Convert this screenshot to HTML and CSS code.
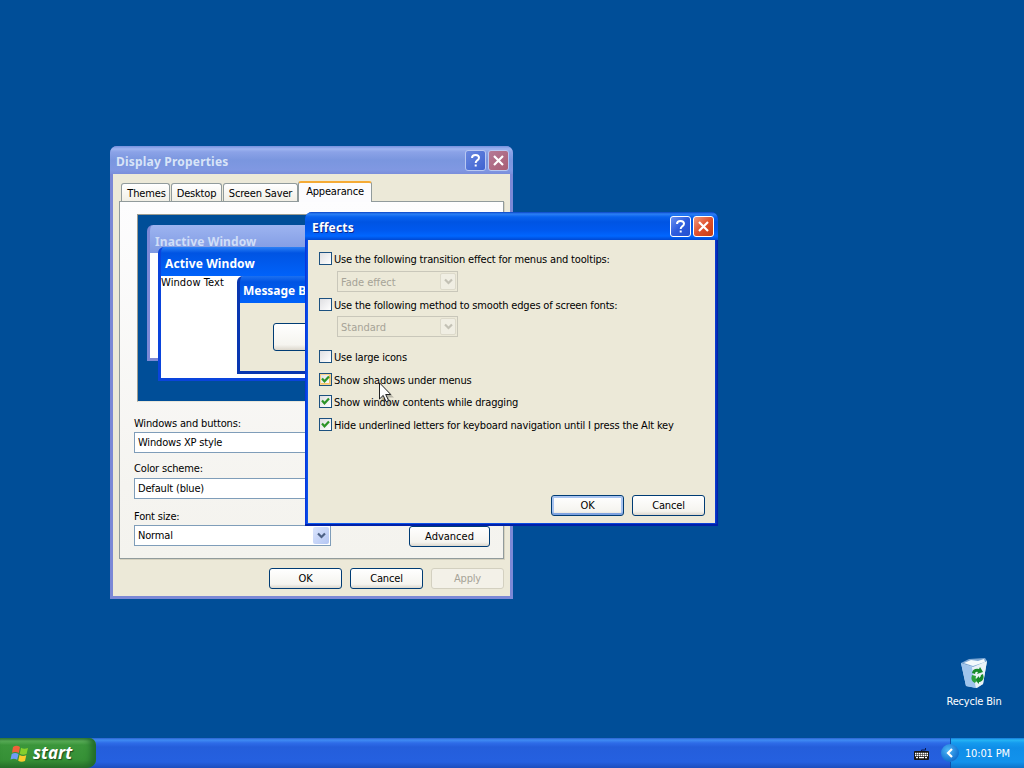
FILE: index.html
```html
<!DOCTYPE html>
<html lang="en">
<head>
  <meta charset="UTF-8" />
  <title>Desktop</title>
  <link rel="stylesheet" href="styles.css">
</head>
<body>
  <div class="desktop">

    <div class="shortcut">
      <svg width="32" height="32" viewBox="0 0 32 32">
        <path d="M3 6L14 9L29 4L25 27L19 31L8 29Z" fill="#c9dff2"/>
        <path d="M3 6L14 10L18 31L8 29Z" fill="#9fc4ec"/>
        <path d="M14 10L29 4L25 27L18 31Z" fill="#e9f2f6"/>
        <path d="M3 6L11 2L27 1L29 4L15 10Z" fill="#7fa8d4"/>
        <path d="M6 6L13 3L20 4L26 2L27 5L15 9Z" fill="#f4fafc"/>
        <path d="M14 16q1-5 7-4l1-2l3 5l-6 2l1-2q-3-1-3 2z" fill="#168a2b"/>
        <path d="M25 17q2 6-3 8h-1v2l-4-4l4-4v2q2-1 2-3z" fill="#168a2b"/>
        <path d="M14 18l4 1q-1 3 1 4l-2 3q-5-2-3-8z" fill="#2ba13c"/>
      </svg>
      <span>Recycle Bin</span>
    </div>

    <div class="window display inactive">
      <div class="titlebar">
        <span class="title">Display Properties</span>
        <div class="tb-btn help"><svg width="19" height="19" viewBox="0 0 19 19"><path d="M6 7q0-3 3.500-3t3.500 2.800q0 1.600-2 2.700q-1.300.8-1.300 2.500M9.700 13.500v2" stroke="#fff" stroke-width="2" fill="none"/></svg></div>
        <div class="tb-btn close"><svg width="19" height="19" viewBox="0 0 19 19"><path d="M5 5l9 9M14 5l-9 9" stroke="#fff" stroke-width="2.200"/></svg></div>
      </div>
      <div class="client">
        <div class="tabs">
          <div class="tab t1">Themes</div>
          <div class="tab t2">Desktop</div>
          <div class="tab t3">Screen Saver</div>
          <div class="tab active">Appearance</div>
        </div>
        <div class="panel">
          <div class="preview">
            <div class="mini mini-inactive"><div class="mini-title">Inactive Window</div></div>
            <div class="mini mini-active">
              <div class="mini-title">Active Window</div>
              <div class="mini-text">Window Text</div>
            </div>
            <div class="mini mini-msg">
              <div class="mini-title">Message Box</div>
              <div class="mini-body"><div class="btn mini-btn">OK</div></div>
            </div>
          </div>
          <div class="label l1">Windows and buttons:</div>
          <div class="combo"><span>Windows XP style</span></div>
          <div class="label l2">Color scheme:</div>
          <div class="combo"><span>Default (blue)</span></div>
          <div class="label l3">Font size:</div>
          <div class="size-row">
            <div class="combo"><span>Normal</span><div class="arrow"><svg width="9" height="7" viewBox="0 0 9 7"><path d="M1 1.500l3.500 3.500L8 1.500" stroke="#4d6185" stroke-width="2.200" fill="none"/></svg></div></div>
            <div class="btn advanced">Advanced</div>
          </div>
        </div>
        <div class="buttons">
          <div class="btn">OK</div>
          <div class="btn">Cancel</div>
          <div class="btn disabled">Apply</div>
        </div>
      </div>
    </div>

    <div class="window effects">
      <div class="titlebar">
        <span class="title">Effects</span>
        <div class="tb-btn help"><svg width="19" height="19" viewBox="0 0 19 19"><path d="M6 7q0-3 3.500-3t3.500 2.800q0 1.600-2 2.700q-1.300.8-1.300 2.500M9.700 13.500v2" stroke="#fff" stroke-width="2" fill="none"/></svg></div>
        <div class="tb-btn close"><svg width="19" height="19" viewBox="0 0 19 19"><path d="M5 5l9 9M14 5l-9 9" stroke="#fff" stroke-width="2.200"/></svg></div>
      </div>
      <div class="client">
        <div class="check first"><i class="box"></i><span>Use the following transition effect for menus and tooltips:</span></div>
        <div class="combo off"><span>Fade effect</span><div class="arrow"><svg width="9" height="7" viewBox="0 0 9 7"><path d="M1 1.500l3.500 3.500L8 1.500" stroke="#c3c1b5" stroke-width="2.200" fill="none"/></svg></div></div>
        <div class="check second"><i class="box"></i><span>Use the following method to smooth edges of screen fonts:</span></div>
        <div class="combo off"><span>Standard</span><div class="arrow"><svg width="9" height="7" viewBox="0 0 9 7"><path d="M1 1.500l3.500 3.500L8 1.500" stroke="#c3c1b5" stroke-width="2.200" fill="none"/></svg></div></div>
        <div class="check third"><i class="box"></i><span>Use large icons</span></div>
        <div class="check"><i class="box hot"><svg width="11" height="11" viewBox="0 0 11 11"><path d="M2 4.500l2.500 2.800L9 2.500" stroke="#2c9428" stroke-width="2.200" fill="none"/></svg></i><span>Show shadows under menus</span></div>
        <div class="check"><i class="box"><svg width="11" height="11" viewBox="0 0 11 11"><path d="M2 4.500l2.500 2.800L9 2.500" stroke="#2c9428" stroke-width="2.200" fill="none"/></svg></i><span>Show window contents while dragging</span></div>
        <div class="check"><i class="box"><svg width="11" height="11" viewBox="0 0 11 11"><path d="M2 4.500l2.500 2.800L9 2.500" stroke="#2c9428" stroke-width="2.200" fill="none"/></svg></i><span>Hide underlined letters for keyboard navigation until I press the Alt key</span></div>
        <div class="buttons">
          <div class="btn default">OK</div>
          <div class="btn">Cancel</div>
        </div>
      </div>
    </div>

    <svg class="cursor" width="16" height="24" viewBox="0 0 16 24">
      <path d="M2.500 3.500v17l4-4l3 6.500l3-1.500l-3-6h5.500z" fill="#000" opacity=".22"/>
      <path d="M.5 .8v16.200l3.700-3.600l2.900 6.300l2.500-1.200l-2.900-6h5.100z" fill="#fff" stroke="#222" stroke-width="1"/>
    </svg>

    <div class="taskbar">
      <div class="start">
        <svg width="19" height="19" viewBox="0 0 19 19">
          <path d="M3 3q3.500-2.500 7 0L8.800 9q-3.300-2-6.800-.3z" fill="#f0613a"/>
          <path d="M11 3.800q3 1.800 7 .2L16.500 10q-3.500 1.600-6.700-.2z" fill="#86cf2d"/>
          <path d="M1.700 10q3.300-2 6.800 0L7.200 15.800q-3.200-1.800-6.700-.2z" fill="#6f9cf5"/>
          <path d="M9.500 11q3.300 1.700 6.800.2L15 17q-3.500 1.500-6.800-.2z" fill="#fbcb2c"/>
        </svg>
        <span>start</span>
      </div>
      <div class="tasks">
        <svg width="15" height="13" viewBox="0 0 15 13">
          <path d="M7.500 4V2h4V0" stroke="#0b1a50" fill="none"/>
          <rect x="0" y="3" width="15" height="9" rx="1" fill="#151515"/>
          <path d="M1 5.500h13M1 7.500h13" stroke="#fff" stroke-width="1.300" stroke-dasharray="1.500 .5"/>
          <path d="M2 9.700h2M5 9.700h5M11 9.700h2" stroke="#fff" stroke-width="1.300"/>
        </svg>
      </div>
      <div class="tray">
        <div class="chevron"><svg width="18" height="18" viewBox="0 0 18 18"><path d="M11 5L7 9l4 4" stroke="#fff" stroke-width="2.200" fill="none"/></svg></div>
        <span>10:01 PM</span>
      </div>
    </div>
  </div>
</body>
</html>
```
FILE: styles.css
```css
* {
  box-sizing: border-box;
}

body {
  margin: 0;
  font-family: "DejaVu Sans Condensed", "DejaVu Sans", sans-serif;
  font-stretch: condensed;
  font-size: 11px;
  line-height: 14px;
  letter-spacing: -0.17px;
  color: #000;
}

svg {
  display: block;
}

span {
  white-space: nowrap;
}

.desktop {
  position: relative;
  width: 1024px;
  height: 768px;
  overflow: hidden;
  background: #004e98;
}

.shortcut {
  position: absolute;
  left: 934px;
  top: 657px;
  width: 80px;
  display: flex;
  flex-direction: column;
  align-items: center;
  gap: 6px;
  color: #fff;
}

/* windows */
.window {
  position: absolute;
  display: flex;
  flex-direction: column;
  border-radius: 7px 7px 0 0;
  padding: 0 3px 3px;
}

.display {
  left: 110px;
  top: 146px;
  width: 403px;
  height: 453px;
  background: #7b88d6;
}

.effects {
  left: 305px;
  top: 212px;
  width: 413px;
  height: 314px;
  background: linear-gradient(90deg, #0831d9, #0a58ee 3px, #0a3fd8 410px, #001ea0);
  box-shadow: inset 0 -2px 0 #0020a8;
}

.titlebar {
  display: flex;
  align-items: center;
  height: 28px;
  flex: none;
  margin: 0 -3px;
  padding: 1px 4px 0 7px;
  border-radius: 7px 7px 0 0;
  background: linear-gradient(#0a44c4, #2b80f5 2px, #0862ee 5px, #0054e3 10px, #0058ee 18px, #0066ff 24px, #0048d2);
}

.inactive .titlebar {
  padding-left: 6px;
  background: linear-gradient(#7590de, #9db4f0 3px, #8ba2e7 6px, #7a96df 14px, #8098e2 24px, #7a8edb);
}

.title {
  flex: 1;
  padding-top: 3px;
  font-family: "Noto Sans", sans-serif;
  font-stretch: normal;
  font-weight: bold;
  font-size: 12px;
  letter-spacing: 0.2px;
  color: #fff;
  text-shadow: 1px 1px #0a2a90;
}

.inactive .title {
  color: #d8e4f8;
  text-shadow: none;
}

.tb-btn {
  width: 21px;
  height: 21px;
  margin-left: 2px;
  border: 1px solid #fff;
  border-radius: 3px;
  background: linear-gradient(135deg, #6c92f0, #2c5bde 50%, #2450cf);
}

.tb-btn.close {
  background: linear-gradient(135deg, #f09a80, #e0502c 50%, #c63d14);
}

.inactive .tb-btn {
  border-color: #b9c8f2;
  background: linear-gradient(135deg, #6a88e0, #3d62d0);
}

.inactive .tb-btn.close {
  background: linear-gradient(135deg, #b57a96, #a95e74);
}

.client {
  flex: 1;
  display: flex;
  flex-direction: column;
  background: #ece9d8;
}

/* tabs */
.tabs {
  display: flex;
  align-items: flex-end;
  height: 27px;
  padding-left: 8px;
  flex: none;
}

.tab {
  height: 18px;
  padding-top: 3px;
  border: 1px solid #919b9c;
  border-bottom: none;
  border-radius: 3px 3px 0 0;
  background: linear-gradient(#fff, #f1efe6);
  text-align: center;
  white-space: nowrap;
}

.t1 {
  width: 49px;
  margin-right: 1px;
  padding-left: 2px;
}

.t2 {
  width: 51px;
  margin-right: 1px;
}

.t3 {
  width: 75px;
}

.tab.active {
  position: relative;
  z-index: 1;
  width: 74px;
  height: 21px;
  margin-bottom: -1px;
  padding-top: 2px;
  border-top: 2px solid #f5ab36;
  background: #fcfcfe;
}

.panel {
  display: flex;
  flex-direction: column;
  width: 385px;
  height: 358px;
  margin-left: 6px;
  padding: 12px 13px 0 14px;
  border: 1px solid #919b9c;
  background: linear-gradient(#fdfdfe, #f5f4f0 80%, #f4f3ee);
  box-shadow: 1px 1px #d5d1bf;
}

/* sample windows */
.preview {
  position: relative;
  flex: none;
  width: 350px;
  height: 188px;
  margin-left: 3px;
  border: 1px solid #9d9c90;
  border-bottom-color: #e8e6da;
  background: #004e98;
  overflow: hidden;
}

.mini {
  position: absolute;
  border-radius: 6px 6px 0 0;
}

.mini-title {
  font-family: "Noto Sans", sans-serif;
  font-stretch: normal;
  font-weight: bold;
  font-size: 12px;
  letter-spacing: 0.1px;
  height: 28px;
  padding: 10px 0 0 5px;
  color: #fff;
  white-space: nowrap;
}

.mini-inactive {
  left: 9px;
  top: 10px;
  width: 300px;
  height: 136px;
  border: 3px solid #7b88d6;
  border-top: none;
  background: linear-gradient(#9db4f0, #7e99e2 28px, #fff 28px);
}

.mini-inactive .mini-title {
  color: #d0def8;
}

.mini-active {
  left: 20px;
  top: 32px;
  width: 300px;
  height: 134px;
  border: 3px solid #0a44dc;
  border-top: none;
  background: linear-gradient(#2b80f5, #0054e3 6px, #0062fa 29px, #fff 29px);
}

.mini-active .mini-title {
  padding-left: 4px;
}

.mini-text {
  padding-top: 1px;
  letter-spacing: 0.1px;
}

.mini-msg {
  left: 99px;
  top: 61px;
  width: 200px;
  height: 98px;
  border: 3px solid #0836b0;
  border-top: none;
  background: linear-gradient(#1c70f0, #0054e3 6px, #0062fa 27px, #ece9d8 27px);
}

.mini-msg .mini-title {
  padding: 8px 0 0 3px;
  letter-spacing: -0.05px;
}

.mini-body {
  padding: 19px 0 0 33px;
}

.btn.mini-btn {
  width: 100px;
  height: 28px;
}

/* form controls */
.label {
  flex: none;
  white-space: nowrap;
}

.l1 {
  margin: 15px 0 1px;
}

.l2 {
  margin: 9px 0 2px;
}

.l3 {
  margin: 11px 0 1px;
}

.combo {
  display: flex;
  align-items: center;
  flex: none;
  justify-content: space-between;
  width: 197px;
  height: 21px;
  padding: 0 1px 0 3px;
  border: 1px solid #7f9db9;
  background: #fff;
}

.combo span {
  padding-top: 1px;
}

.arrow {
  display: flex;
  align-items: center;
  justify-content: center;
  width: 16px;
  height: 17px;
  border-radius: 2px;
  background: linear-gradient(135deg, #dbe5fd, #b4c6f3);
}

.size-row {
  display: flex;
  justify-content: space-between;
  align-items: flex-start;
}

.btn {
  display: flex;
  align-items: center;
  justify-content: center;
  width: 73px;
  height: 21px;
  padding-top: 1px;
  border: 1px solid #003c74;
  border-radius: 3px;
  background: linear-gradient(#fff, #f5f4ef 80%, #dcd7cd);
}

.btn.advanced {
  width: 81px;
  margin-top: 1px;
  letter-spacing: 0;
}

.btn.default {
  box-shadow: inset 0 -2px #7fa3e0, inset 0 0 0 2px #a9c4f0;
}

.btn.disabled {
  border-color: #d3d0c0;
  background: #f3f1e8;
  color: #a6a397;
}

.display .buttons {
  display: flex;
  justify-content: flex-end;
  gap: 8px;
  padding: 9px 6px 0 0;
}

/* effects dialog */
.check {
  display: flex;
  align-items: flex-start;
  gap: 2px;
  height: 14px;
  flex: none;
  margin: 0 0 8.700px 11px;
}

.check span {
  padding-top: 1px;
}

.check.first {
  margin: 12px 0 5px 11px;
}

.check.second {
  margin: 6px 0 4px 11px;
}

.check.third {
  margin-top: 13px;
}

.box {
  width: 13px;
  height: 13px;
  border: 1px solid #1c5180;
  background: linear-gradient(135deg, #dfdfe2, #fff);
}

.box.hot {
  box-shadow: inset 0 0 0 1px #f9d28a, inset -1px -1px 0 1px #f6c568;
}

.combo.off {
  width: 121px;
  margin-left: 29px;
  border-color: #c9c7ba;
  background: transparent;
  color: #a6a397;
}

.off span {
  padding-top: 2px;
  letter-spacing: 0;
}

.off .arrow {
  border: 1px solid #dddacb;
  background: #f0eee3;
}

.effects .buttons {
  display: flex;
  justify-content: flex-end;
  gap: 8px;
  margin-top: auto;
  padding: 0 10px 7px 0;
}

.cursor {
  position: absolute;
  left: 379px;
  top: 382px;
}

/* taskbar */
.taskbar {
  position: absolute;
  left: 0;
  bottom: 0;
  width: 1024px;
  height: 30px;
  display: flex;
  background: linear-gradient(#2a62cf, #3f8cf3 2px, #2e6ce8 5px, #245edb 9px, #2560e0 24px, #1c4dbd);
}

.start {
  display: flex;
  align-items: center;
  gap: 4px;
  width: 96px;
  padding-left: 10px;
  border-radius: 0 7px 9px 0;
  background: linear-gradient(#3a7f3a, #5fb35c 3px, #3b963b 7px, #369036 22px, #2a732a);
  box-shadow: inset -5px 0 6px #226b2a;
}

.start span {
  font-family: "Open Sans", sans-serif;
  font-stretch: normal;
  font-size: 17px;
  font-style: italic;
  font-weight: bold;
  letter-spacing: 0;
  color: #fff;
  text-shadow: 1px 1px 1px #1e4a1e;
}

.tasks {
  flex: 1;
  display: flex;
  align-items: center;
  justify-content: flex-end;
  padding: 2px 21px 0 0;
}

.tray {
  display: flex;
  align-items: center;
  gap: 6px;
  width: 74px;
  color: #fff;
  border-left: 1px solid #0f4fa8;
  background: linear-gradient(#1678d8, #26b5f5 2px, #159aee 5px, #0f8ee8 10px, #1292ec 24px, #0d73c9);
}

.tray span {
  padding-top: 1px;
}

.chevron {
  flex: none;
  width: 18px;
  height: 18px;
  margin-left: -10px;
  border-radius: 50%;
  background: radial-gradient(circle at 40% 35%, #4db7f8, #1271d0 70%, #6cc6fa);
}
```
